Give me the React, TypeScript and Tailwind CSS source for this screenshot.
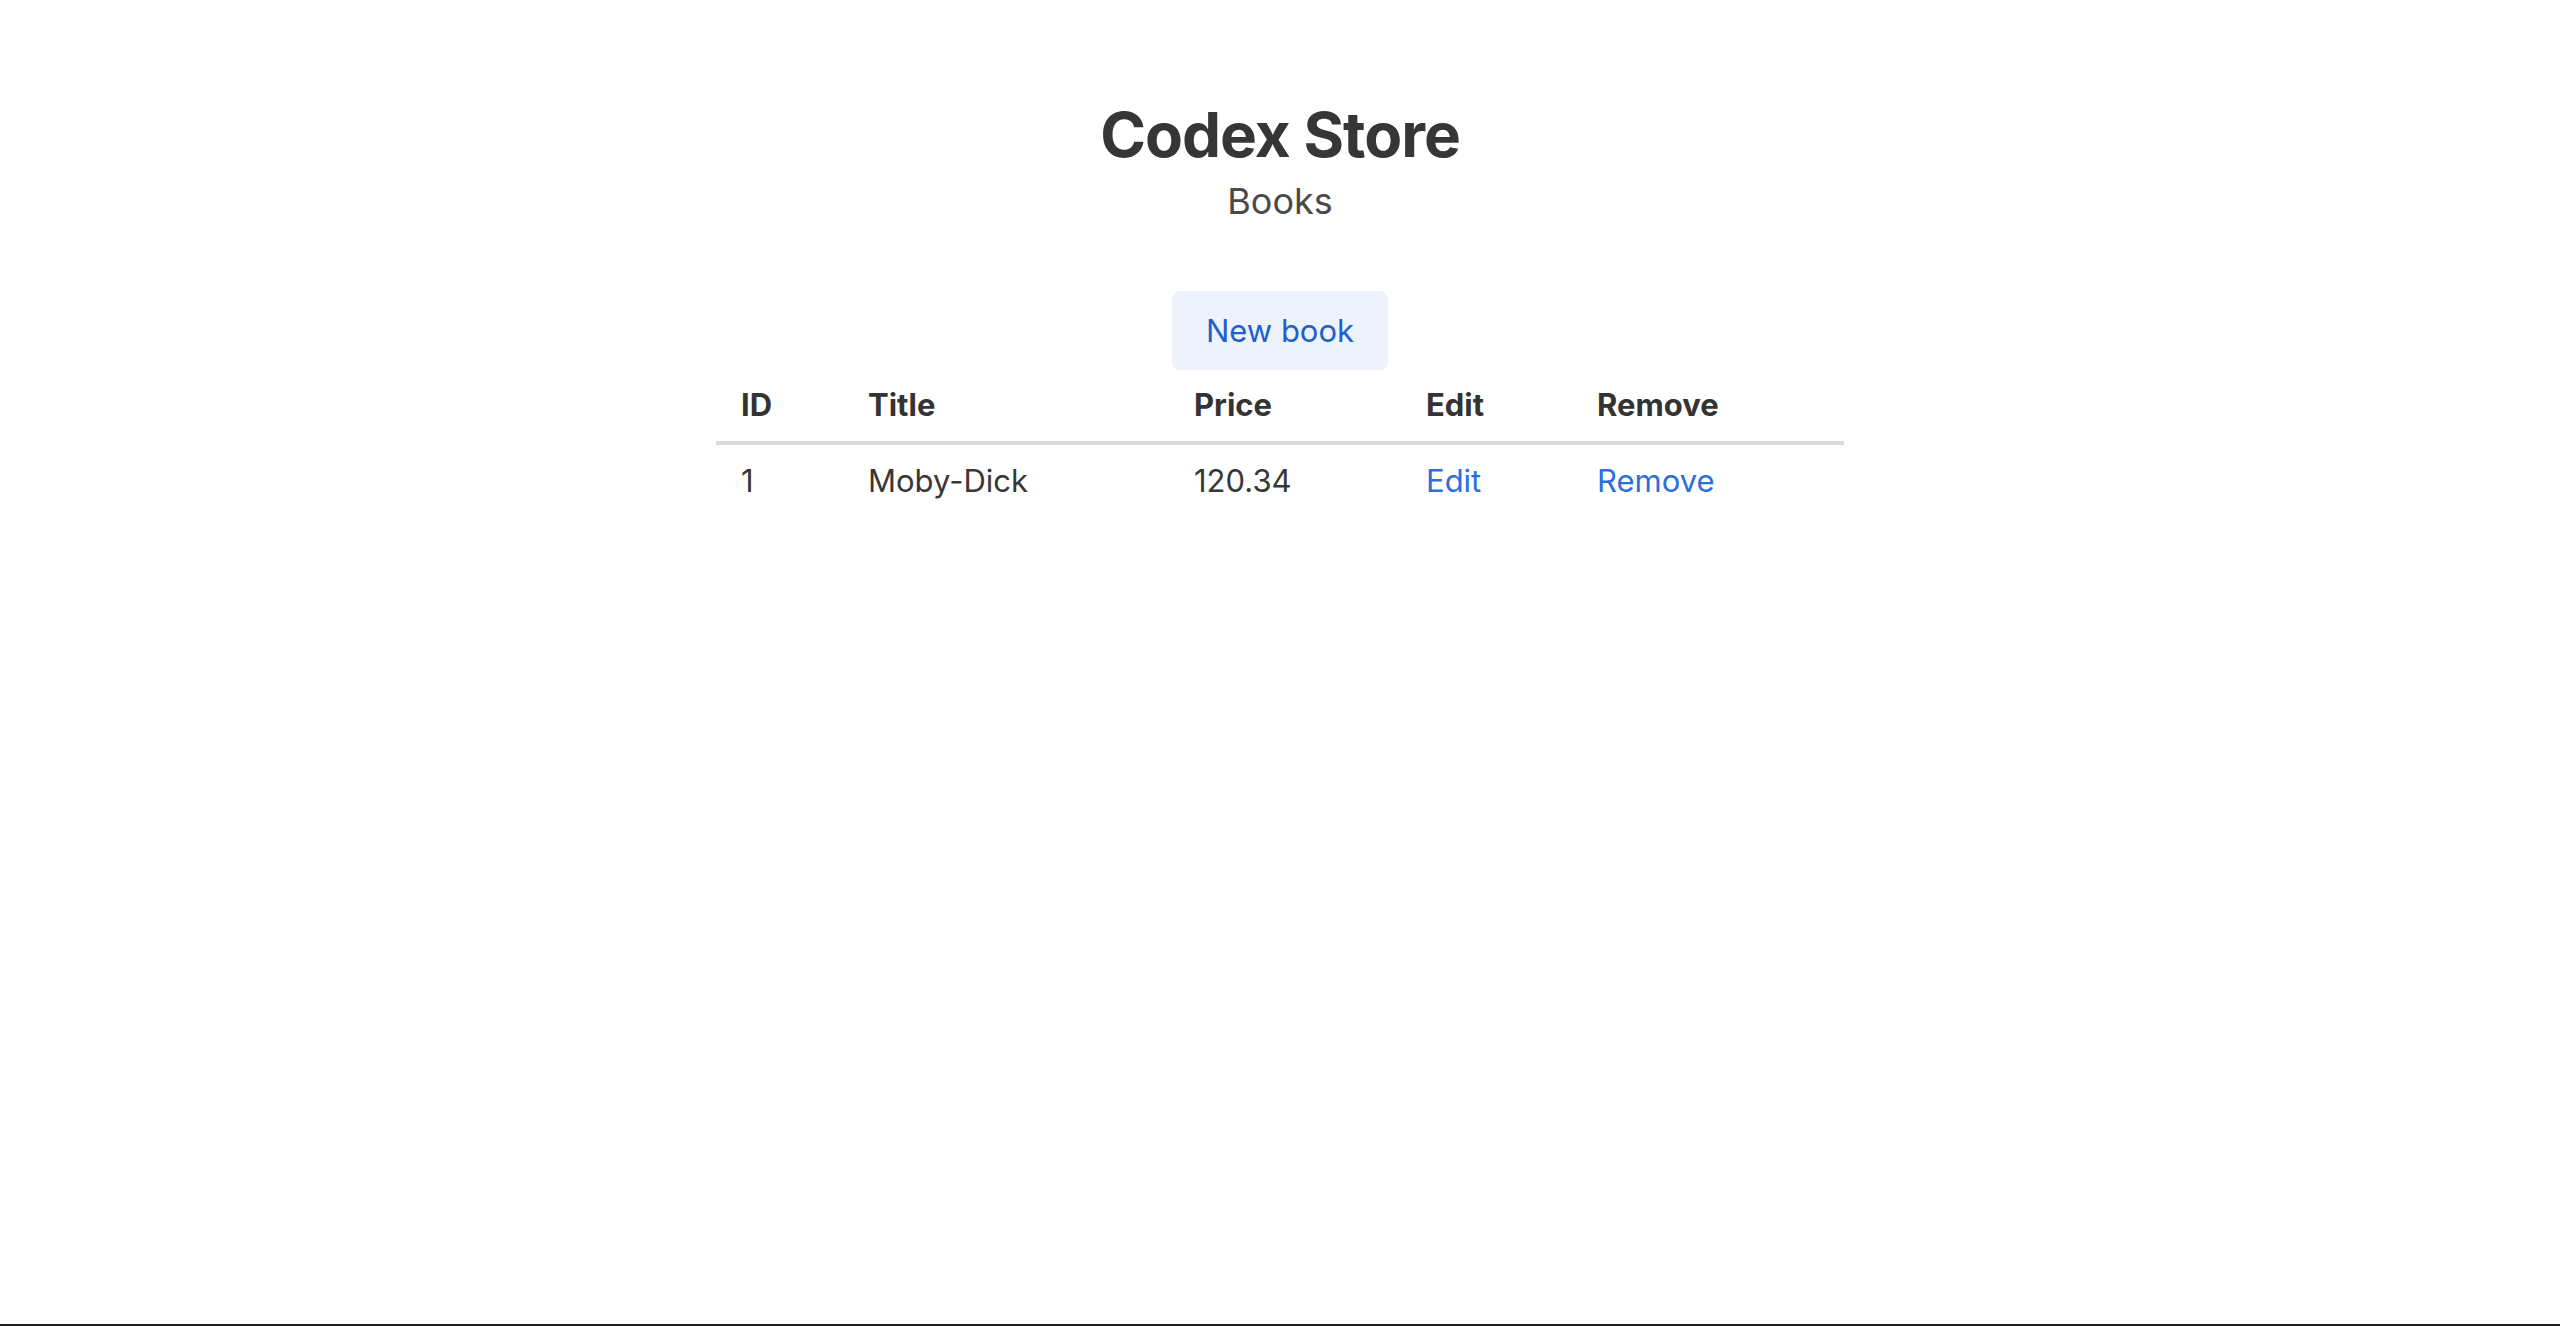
import React from "react";

const font = { fontFamily: "Inter, 'Noto Sans', sans-serif" };

export default function App() {
  return (
    <div
      className="h-[1326px] w-full bg-white border-b-2 border-[#1c1c1c] text-[#373737]"
      style={font}
    >
      <div className="mx-auto w-[1128px] pt-[96px] flex flex-col items-center">
        <h1 className="text-[62px] leading-[78px] font-bold tracking-[-1px] text-[#363636]">
          Codex Store
        </h1>
        <p className="mt-[3px] text-[36px] leading-[48px] text-[#4a4a4a]">Books</p>
        <button className="mt-[66px] h-[79px] px-[34px] rounded-[8px] bg-[#edf2fc] text-[31px] leading-[40px] text-[#1f5fcb]">
          New book
        </button>
        <table className="w-[1128px] table-fixed border-collapse text-left text-[31px]">
          <colgroup>
            <col className="w-[127px]" />
            <col className="w-[326px]" />
            <col className="w-[232px]" />
            <col className="w-[171px]" />
            <col className="w-[272px]" />
          </colgroup>
          <thead>
            <tr className="h-[73px] border-b-4 border-[#dadada]">
              <th className="px-[25px] font-bold text-[#333333]">ID</th>
              <th className="px-[25px] font-bold text-[#333333]">Title</th>
              <th className="px-[25px] font-bold text-[#333333]">Price</th>
              <th className="px-[25px] font-bold text-[#333333]">Edit</th>
              <th className="px-[25px] font-bold text-[#333333]">Remove</th>
            </tr>
          </thead>
          <tbody>
            <tr className="h-[75px]">
              <td className="px-[25px] text-[#373737]">1</td>
              <td className="px-[25px] text-[#373737]">Moby-Dick</td>
              <td className="px-[25px] text-[#373737]">120.34</td>
              <td className="px-[25px]">
                <a className="text-[#2c6fdc]" href="#">Edit</a>
              </td>
              <td className="px-[25px]">
                <a className="text-[#2c6fdc]" href="#">Remove</a>
              </td>
            </tr>
          </tbody>
        </table>
      </div>
    </div>
  );
}
